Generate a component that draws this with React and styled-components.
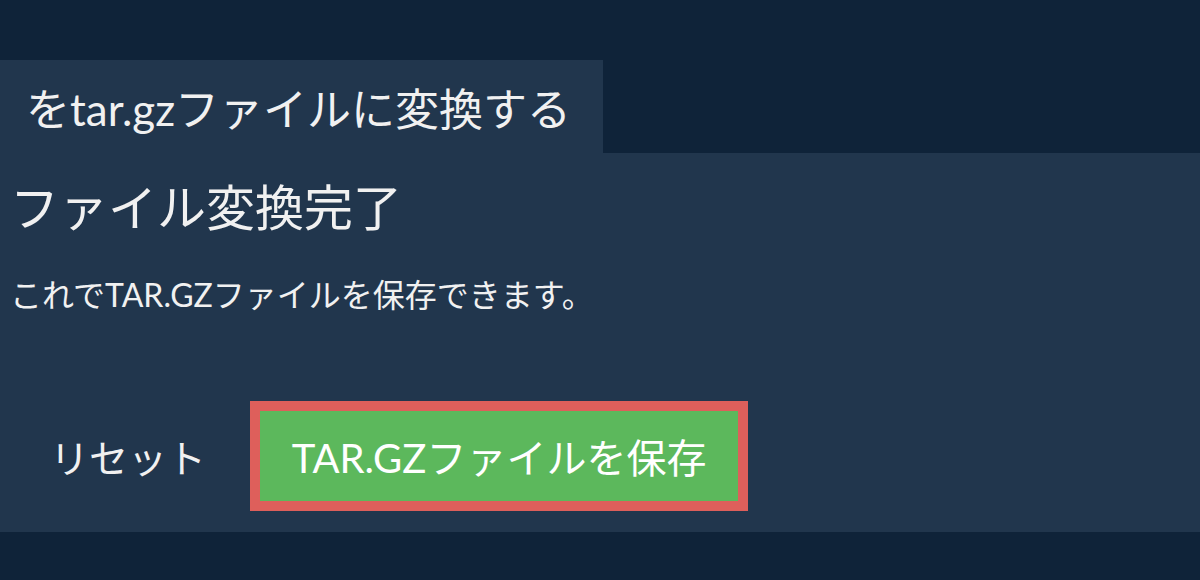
import React from "react";
import styled, { createGlobalStyle } from "styled-components";

const GlobalStyle = createGlobalStyle`
  html, body {
    margin: 0;
    padding: 0;
    background: #0f2339;
  }
  body {
    font-family: Lato, "Noto Sans CJK JP", sans-serif;
    color: #f1f1f1;
  }
`;

const Page = styled.div`
  width: 1200px;
  height: 580px;
  padding-top: 60px;
  box-sizing: border-box;
  background: #0f2339;
`;

const TabRow = styled.div`
  display: flex;
`;

const Tab = styled.div`
  width: 603px;
  height: 93px;
  box-sizing: border-box;
  padding-left: 26px;
  display: flex;
  align-items: center;
  background: #21364d;
  font-size: 44px;
  color: #f1f1f1;
`;

const Panel = styled.div`
  height: 379px;
  box-sizing: border-box;
  padding: 24px 10px 0;
  background: #21364d;
  display: flex;
  flex-direction: column;
`;

const Title = styled.h1`
  margin: 0;
  font-size: 49px;
  font-weight: 400;
  line-height: 60px;
`;

const Message = styled.p`
  margin: 38px 0 0;
  font-size: 32px;
  line-height: 40px;
`;

const Actions = styled.div`
  margin-top: 86px;
  display: flex;
  align-items: center;
  gap: 8px;
`;

const ResetButton = styled.button`
  border: none;
  background: transparent;
  color: #f1f1f1;
  font-family: inherit;
  font-size: 39px;
  padding: 0 36px 0 40px;
  height: 110px;
  cursor: pointer;
`;

const SaveButton = styled.button`
  width: 498px;
  height: 110px;
  box-sizing: border-box;
  border: 10px solid #de5f5b;
  background: #5cb85c;
  color: #ffffff;
  font-family: inherit;
  font-size: 40px;
  cursor: pointer;
`;

export default function App() {
  return (
    <Page>
      <GlobalStyle />
      <TabRow>
        <Tab>をtar.gzファイルに変換する</Tab>
      </TabRow>
      <Panel>
        <Title>ファイル変換完了</Title>
        <Message>これでTAR.GZファイルを保存できます。</Message>
        <Actions>
          <ResetButton>リセット</ResetButton>
          <SaveButton>TAR.GZファイルを保存</SaveButton>
        </Actions>
      </Panel>
    </Page>
  );
}
